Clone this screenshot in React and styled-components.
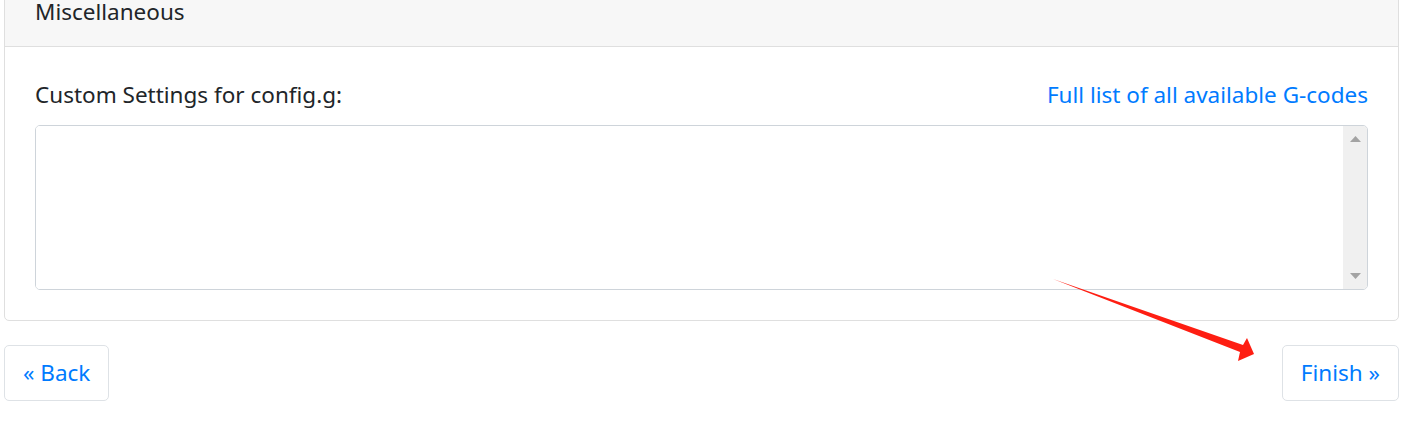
import React from "react";
import styled, { createGlobalStyle } from "styled-components";

const COLOR = {
  TEXT: "#212529",
  LINK: "#007bff",
  BORDER: "#dfdfdf",
  HEADER: "#f7f7f7",
  INPUT: "#ced4da",
  ARROW: "#fe1e12",
};

const FONT_SIZE = "22.5px";

const GlobalStyle = createGlobalStyle`
  html, body {
    margin: 0;
    background: #fff;
    font-family: "Noto Sans", "Open Sans", sans-serif;
    color: ${COLOR.TEXT};
  }
`;

const Page = styled.div`
  position: relative;
  width: 1404px;
  height: 436px;
  box-sizing: border-box;
  padding: 0 5px 0 4px;
  overflow: hidden;
`;

// the page is scrolled: the top of the card is out of view
const Card = styled.section`
  margin-top: -25px;
  border: 1px solid ${COLOR.BORDER};
  border-radius: 5px;
  background: #fff;
  overflow: hidden;
`;

const CardHeader = styled.header`
  background: ${COLOR.HEADER};
  border-bottom: 1px solid ${COLOR.BORDER};
  padding: 18px 30px 16px;
  font-size: ${FONT_SIZE};
  line-height: 36px;
`;

const CardBody = styled.div`
  padding: 30px;
`;

const LabelRow = styled.div`
  display: flex;
  justify-content: space-between;
  align-items: baseline;
  margin-bottom: 12px;
  font-size: ${FONT_SIZE};
  line-height: 36px;
`;

const Link = styled.a`
  color: ${COLOR.LINK};
  text-decoration: none;
`;

const InputBox = styled.div`
  display: flex;
  height: 165px;
  box-sizing: border-box;
  border: 1px solid ${COLOR.INPUT};
  border-radius: 5px;
  overflow: hidden;
`;

const TextArea = styled.textarea`
  flex: 1;
  border: none;
  outline: none;
  resize: none;
  font: inherit;
  font-size: ${FONT_SIZE};
  padding: 9px 18px;
`;

const ScrollTrack = styled.div`
  width: 24px;
  background: #f0f0f0;
  display: flex;
  flex-direction: column;
  justify-content: space-between;
  align-items: center;
  padding: 10px 0;
`;

const Triangle = ({ down }) => (
  <svg width="11" height="6" viewBox="0 0 11 6">
    <polygon points={down ? "0,0 11,0 5.5,6" : "0,6 11,6 5.5,0"} fill="#a3a3a3" />
  </svg>
);

const Footer = styled.div`
  display: flex;
  justify-content: space-between;
  margin-top: 24px;
`;

const Button = styled.button`
  height: 56px;
  padding: 0 18px;
  background: #fff;
  border: 1px solid #dee2e6;
  border-radius: 5px;
  color: ${COLOR.LINK};
  font-family: inherit;
  font-size: ${FONT_SIZE};
  line-height: 36px;
`;

const Arrow = styled.svg`
  position: absolute;
  left: 0;
  top: 0;
  pointer-events: none;
`;

export default function App() {
  return (
    <Page>
      <GlobalStyle />
      <Card>
        <CardHeader>Miscellaneous</CardHeader>
        <CardBody>
          <LabelRow>
            <label>Custom Settings for config.g:</label>
            <Link href="#">Full list of all available G-codes</Link>
          </LabelRow>
          <InputBox>
            <TextArea />
            <ScrollTrack>
              <Triangle />
              <Triangle down />
            </ScrollTrack>
          </InputBox>
        </CardBody>
      </Card>
      <Footer>
        <Button>« Back</Button>
        <Button>Finish »</Button>
      </Footer>
      <Arrow width="1404" height="436">
        <polygon
          points="1053,279 1243,345 1247,338 1254,354 1238,361 1240,352"
          fill={COLOR.ARROW}
        />
      </Arrow>
    </Page>
  );
}
